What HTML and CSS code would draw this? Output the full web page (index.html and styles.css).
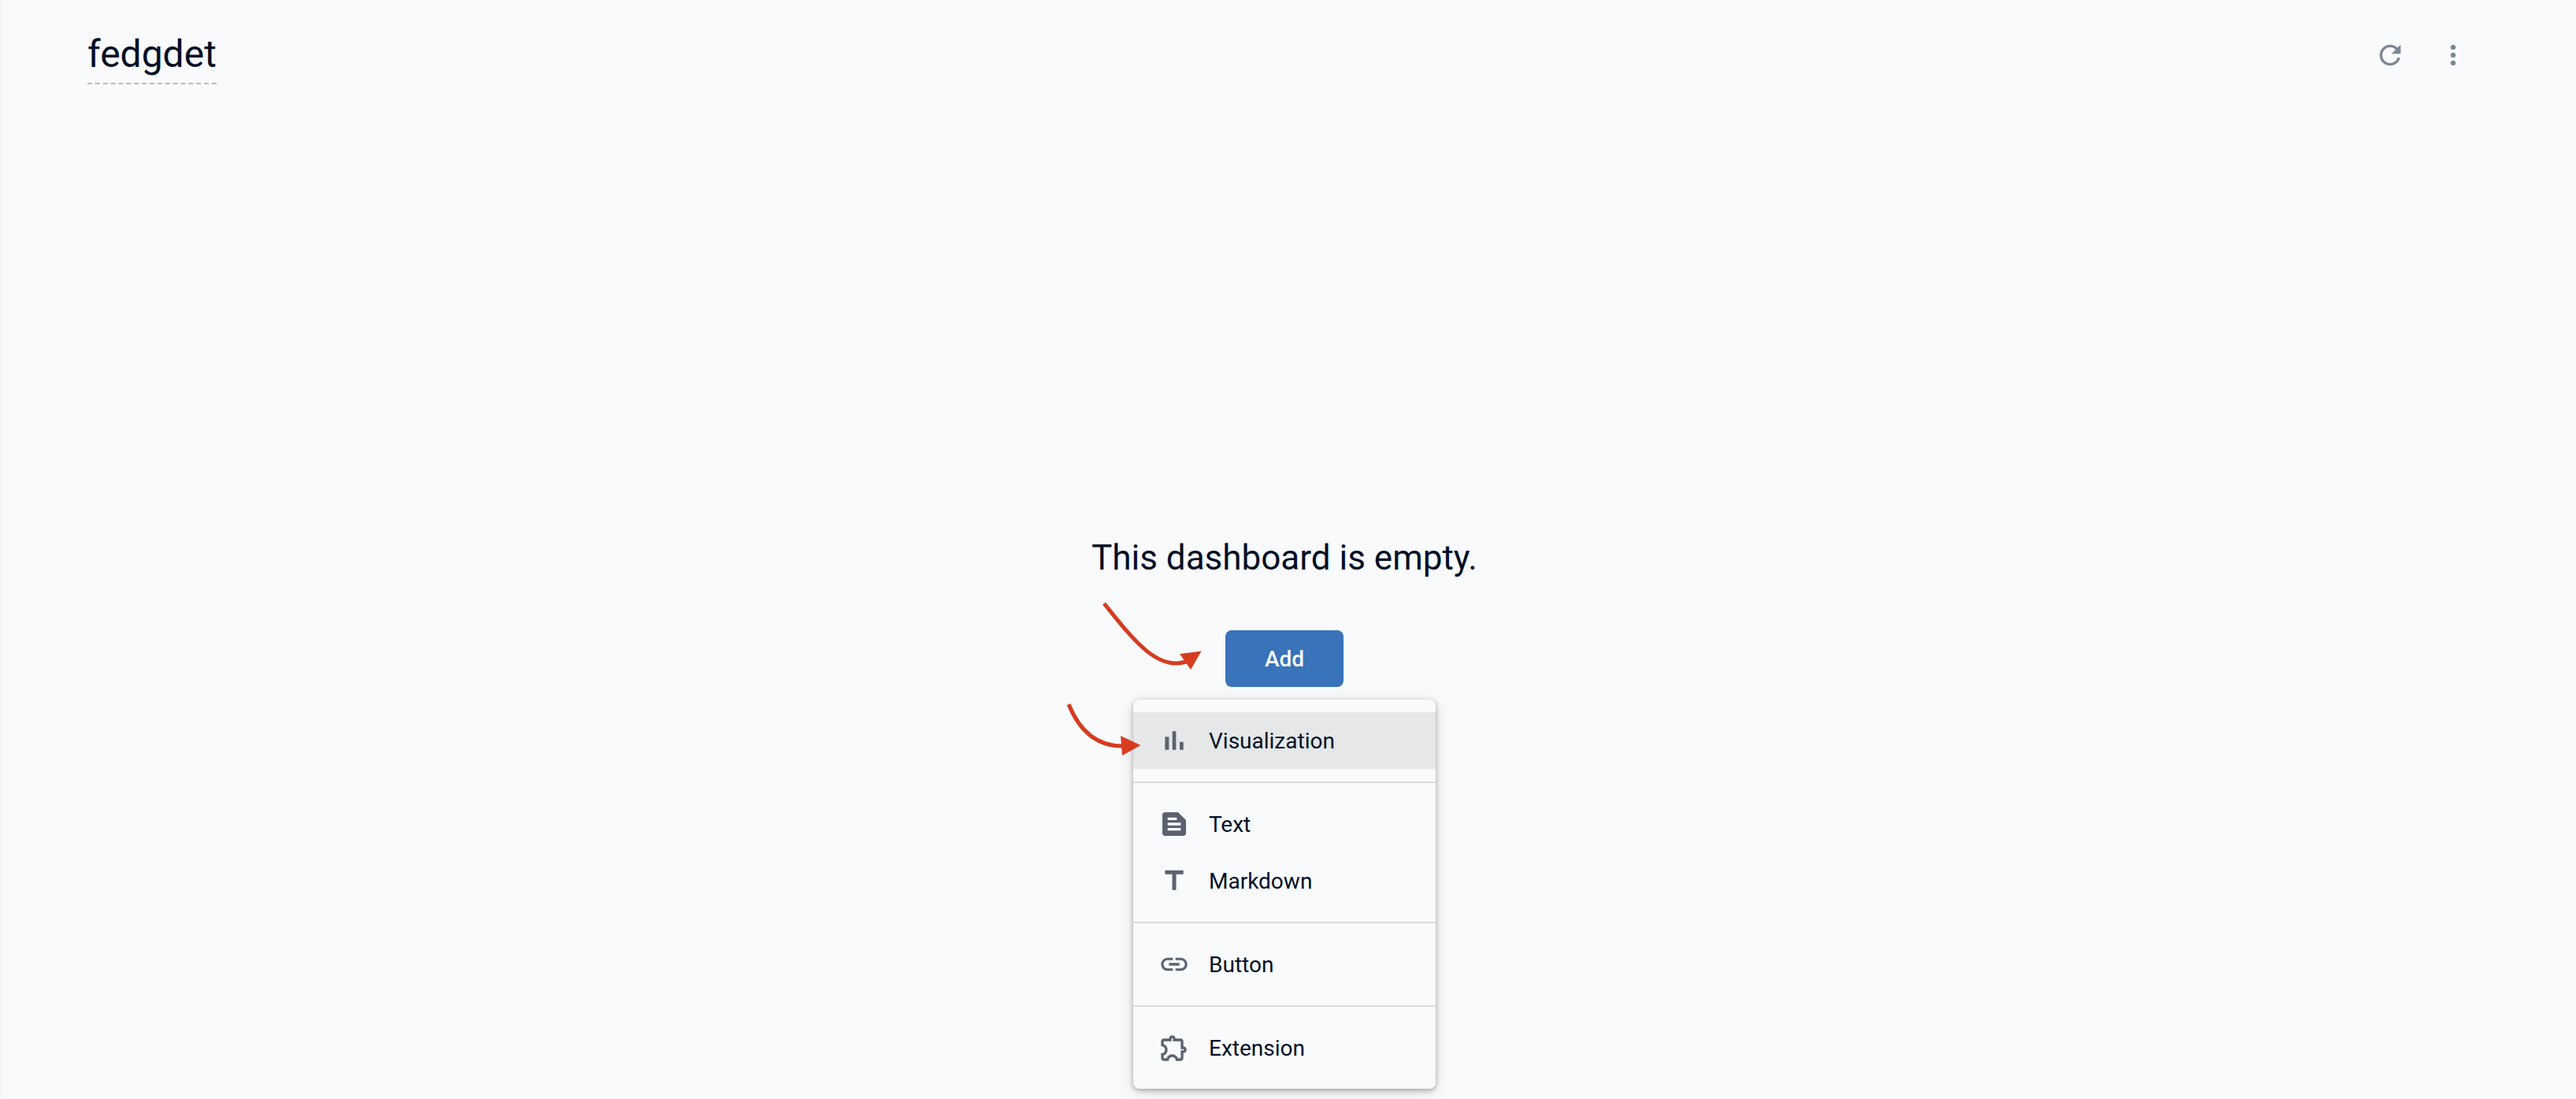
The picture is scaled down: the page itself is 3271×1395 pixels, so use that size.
FILE: index.html
```html
<!DOCTYPE html>
<html lang="en">
<head>
<meta charset="utf-8">
<title>fedgdet</title>
<link rel="stylesheet" href="styles.css">
</head>
<body>
<header class="topbar">
  <h1 class="title">fedgdet</h1>
  <div class="actions">
    <button class="icon-button" type="button" aria-label="Refresh">
      <svg class="icon" viewBox="0 0 24 24"><path d="M17.65 6.35C16.2 4.9 14.21 4 12 4c-4.42 0-7.99 3.58-7.99 8s3.57 8 7.99 8c3.73 0 6.84-2.55 7.73-6h-2.08c-.82 2.33-3.04 4-5.65 4-3.31 0-6-2.69-6-6s2.69-6 6-6c1.66 0 3.14.69 4.22 1.78L13 11h7V4l-2.35 2.35z"/></svg>
    </button>
    <button class="icon-button" type="button" aria-label="More options">
      <svg class="icon" viewBox="0 0 24 24"><path d="M12 8c1.1 0 2-.9 2-2s-.9-2-2-2-2 .9-2 2 .9 2 2 2zm0 2c-1.1 0-2 .9-2 2s.9 2 2 2 2-.9 2-2-.9-2-2-2zm0 6c-1.1 0-2 .9-2 2s.9 2 2 2 2-.9 2-2-.9-2-2-2z"/></svg>
    </button>
  </div>
</header>
<main class="empty">
  <h2 class="message">This dashboard is empty.</h2>
  <div class="adder">
    <button class="add" type="button" aria-haspopup="menu" aria-expanded="true">Add</button>
    <div class="menu" role="menu">
      <div class="group">
        <button class="item active" type="button" role="menuitem">
          <svg class="icon" viewBox="0 0 24 24"><path d="M5 9.2h3V19H5zM10.6 5h2.8v14h-2.8zm5.6 8H19v6h-2.8z"/></svg>
          Visualization
        </button>
      </div>
      <div class="group">
        <button class="item" type="button" role="menuitem">
          <svg class="icon" viewBox="0 0 24 24"><path d="M20.41 8.41l-4.83-4.83c-.37-.37-.88-.58-1.41-.58H5c-1.1 0-2 .9-2 2v14c0 1.1.9 2 2 2h14c1.1 0 2-.9 2-2V9.83c0-.53-.21-1.04-.59-1.42zM7 7h7v2H7V7zm10 10H7v-2h10v2zm0-4H7v-2h10v2z"/></svg>
          Text
        </button>
        <button class="item" type="button" role="menuitem">
          <svg class="icon" viewBox="0 0 24 24"><path d="M5 4v3h5.5v12h3V7H19V4z"/></svg>
          Markdown
        </button>
      </div>
      <div class="group">
        <button class="item" type="button" role="menuitem">
          <svg class="icon" viewBox="0 0 24 24"><path d="M3.9 12c0-1.71 1.39-3.1 3.1-3.1h4V7H7c-2.76 0-5 2.24-5 5s2.24 5 5 5h4v-1.9H7c-1.71 0-3.1-1.39-3.1-3.1zM8 13h8v-2H8v2zm9-6h-4v1.9h4c1.71 0 3.1 1.39 3.1 3.1s-1.39 3.1-3.1 3.1h-4V17h4c2.76 0 5-2.24 5-5s-2.24-5-5-5z"/></svg>
          Button
        </button>
      </div>
      <div class="group">
        <button class="item" type="button" role="menuitem">
          <svg class="icon" viewBox="0 0 24 24"><path d="M10.5 4.5c.28 0 .5.22.5.5v2h6v6h2c.28 0 .5.22.5.5s-.22.5-.5.5h-2v6h-2.12c-.68-1.75-2.39-3-4.38-3s-3.7 1.25-4.38 3H4v-2.12c1.75-.68 3-2.39 3-4.38 0-1.99-1.24-3.7-2.99-4.38L4 7h6V5c0-.28.22-.5.5-.5m0-2C9.12 2.5 8 3.62 8 5H4c-1.1 0-1.99.9-1.99 2v3.8h.29c1.49 0 2.7 1.21 2.7 2.7s-1.21 2.7-2.7 2.7H2V20c0 1.1.9 2 2 2h3.8v-.3c0-1.49 1.21-2.7 2.7-2.7s2.7 1.21 2.7 2.7v.3H17c1.1 0 2-.9 2-2v-4c1.38 0 2.5-1.12 2.5-2.5S20.38 11 19 11V7c0-1.1-.9-2-2-2h-4c0-1.38-1.12-2.5-2.5-2.5z"/></svg>
          Extension
        </button>
      </div>
    </div>
    <svg class="arrows" viewBox="0 0 200 220" aria-hidden="true">
      <path class="stroke" d="M52 16C86 58 118 102 156 90"/>
      <path class="head" d="M175.500 76.500L148 80L162 100Z"/>
      <path class="stroke" d="M7 144C20 176 42 197 75 197"/>
      <path class="head" d="M98.500 196L73 184L75 209Z"/>
    </svg>
  </div>
</main>
</body>
</html>
```

FILE: styles.css
```css
* {
  box-sizing: border-box;
}

body {
  margin: 0;
  padding-right: 9px;
  min-height: 100vh;
  background: #f8fafc;
  box-shadow: inset 2px 0 3px rgba(0, 0, 0, 0.03);
  color: #020f26;
  font-family: Roboto, sans-serif;
  font-size: 28px;
}

button {
  border: 0;
  font: inherit;
  cursor: pointer;
}

.topbar {
  display: flex;
  align-items: center;
  justify-content: space-between;
  height: 140px;
  padding: 0 107px 0 111px;
}

.title {
  margin: 0;
  border-bottom: 2px dashed #bbbdc0;
  font-size: 48px;
  font-weight: 400;
  line-height: 72px;
}

.actions {
  display: flex;
}

.icon-button {
  display: flex;
  align-items: center;
  justify-content: center;
  width: 80px;
  height: 80px;
  padding: 0;
  background: none;
  color: #7b8697;
}

.icon {
  flex: none;
  width: 40px;
  height: 40px;
  fill: currentColor;
}

.empty {
  display: flex;
  flex-direction: column;
  align-items: center;
  padding-top: 536px;
}

.message {
  margin: 0;
  font-size: 44px;
  font-weight: 400;
  line-height: 64px;
}

.adder {
  position: relative;
  display: flex;
  flex-direction: column;
  align-items: center;
  gap: 16px;
  padding-top: 60px;
}

.add {
  width: 150px;
  height: 72px;
  border-radius: 8px;
  background: #3973b9;
  color: #f8fafc;
  font-weight: 500;
}

.menu {
  width: 384px;
  border-radius: 8px;
  background: #f8fafc;
  box-shadow: 0 2px 6px rgba(0, 0, 0, 0.3), 0 4px 20px rgba(0, 0, 0, 0.12);
}

.group {
  padding: 16px 0;
}

.group + .group {
  border-top: 2px solid #d9dbdd;
}

.item {
  display: flex;
  align-items: center;
  gap: 24px;
  width: 100%;
  height: 72px;
  padding: 0 32px;
  background: none;
  color: inherit;
  text-align: left;
}

.item .icon {
  color: #5b6270;
}

.active {
  background: #e5e7e8;
}

.arrows {
  position: absolute;
  top: 10px;
  left: -89px;
  width: 200px;
  height: 220px;
  pointer-events: none;
}

.stroke {
  fill: none;
  stroke: #d63c20;
  stroke-width: 5;
}

.head {
  fill: #d63c20;
}
```
